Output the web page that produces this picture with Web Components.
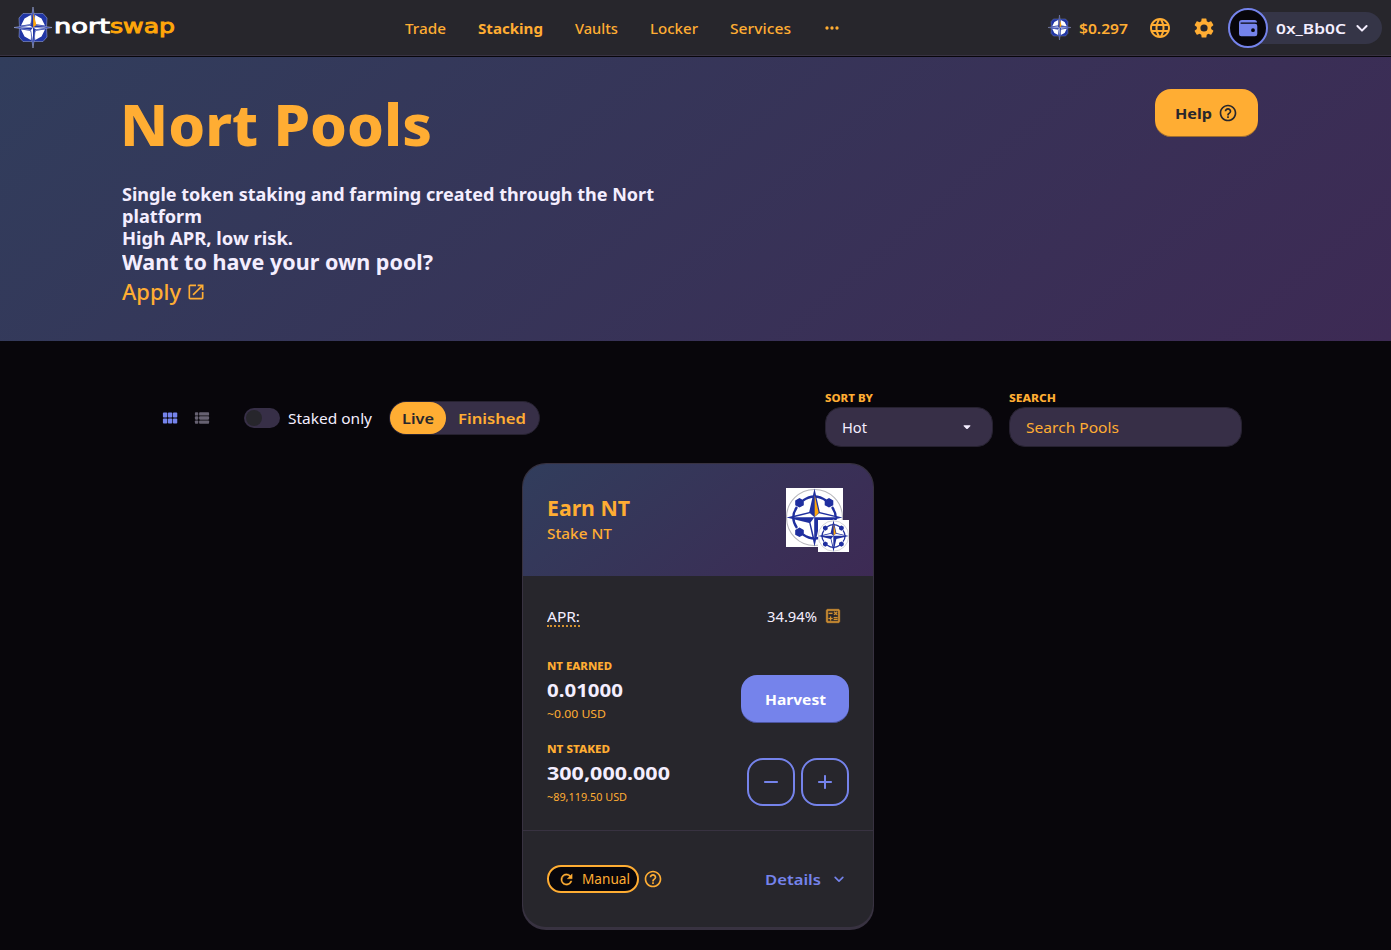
<!DOCTYPE html>
<html lang="en">
<head>
<meta charset="utf-8">
<title>Nort Pools</title>
<style>
html,body{margin:0;height:100%;overflow:hidden;background:#08060b}
body{font-family:"Noto Sans","Open Sans",sans-serif;color:#f4eeff;
--gold:#ffad33;--violet:#7583eb;--panel:#27262c;--line:#383241;--input:#372f47;--grad:linear-gradient(139.73deg,#313d5c 0%,#3d2a54 100%)}
</style>
</head>
<body>
<nort-app></nort-app>
<script>
const ICONS={
 more:'<circle cx="6" cy="12" r="2"/><circle cx="12" cy="12" r="2"/><circle cx="18" cy="12" r="2"/>',
 globe:'<path d="M11.99 2C6.47 2 2 6.48 2 12s4.47 10 9.99 10C17.52 22 22 17.52 22 12S17.52 2 11.99 2zm6.93 6h-2.95c-.32-1.25-.78-2.45-1.38-3.56 1.84.63 3.37 1.91 4.33 3.56zM12 4.04c.83 1.2 1.48 2.53 1.91 3.96h-3.82c.43-1.43 1.08-2.76 1.91-3.96zM4.26 14C4.1 13.36 4 12.69 4 12s.1-1.36.26-2h3.38c-.08.66-.14 1.32-.14 2s.06 1.34.14 2H4.26zm.82 2h2.95c.32 1.25.78 2.45 1.38 3.56-1.84-.63-3.37-1.9-4.33-3.56zm2.95-8H5.08c.96-1.66 2.49-2.93 4.33-3.56C8.81 5.55 8.35 6.75 8.03 8zM12 19.96c-.83-1.2-1.48-2.53-1.91-3.96h3.82c-.43 1.43-1.08 2.76-1.91 3.96zM14.34 14H9.66c-.09-.66-.16-1.32-.16-2s.07-1.35.16-2h4.68c.09.65.16 1.32.16 2s-.07 1.34-.16 2zm.25 5.56c.6-1.11 1.06-2.31 1.38-3.56h2.95c-.96 1.65-2.49 2.93-4.33 3.56zM16.36 14c.08-.66.14-1.32.14-2s-.06-1.34-.14-2h3.38c.16.64.26 1.31.26 2s-.1 1.36-.26 2h-3.38z"/>',
 cog:'<path d="M19.14 12.94c.04-.3.06-.61.06-.94s-.02-.64-.07-.94l2.03-1.58a.49.49 0 0 0 .12-.61l-1.92-3.32a.49.49 0 0 0-.59-.22l-2.39.96c-.5-.38-1.03-.7-1.62-.94l-.36-2.54a.48.48 0 0 0-.48-.41h-3.84c-.24 0-.43.17-.47.41l-.36 2.54c-.59.24-1.13.57-1.62.94l-2.39-.96c-.22-.08-.47 0-.59.22L2.74 8.87c-.12.21-.08.47.12.61l2.03 1.58c-.05.3-.09.63-.09.94s.02.64.07.94l-2.03 1.58a.49.49 0 0 0-.12.61l1.92 3.32c.12.22.37.29.59.22l2.39-.96c.5.38 1.03.7 1.62.94l.36 2.54c.05.24.24.41.48.41h3.84c.24 0 .44-.17.47-.41l.36-2.54c.59-.24 1.13-.56 1.62-.94l2.39.96c.22.08.47 0 .59-.22l1.92-3.32a.49.49 0 0 0-.12-.61l-2.01-1.58zM12 15.6A3.6 3.6 0 1 1 12 8.4a3.6 3.6 0 0 1 0 7.2z"/>',
 wallet:'<path fill-rule="evenodd" d="M6 4h12.5A2.5 2.5 0 0 1 21 6.500H5a.6.6 0 0 0 0 1.200h14a2.300 2.300 0 0 1 2.300 2.300v8a2.300 2.300 0 0 1-2.300 2.300H5.300A2.300 2.300 0 0 1 3 18V7a3 3 0 0 1 3-3zm11 8.300a1.900 1.900 0 1 0 0 3.800 1.900 1.900 0 0 0 0-3.800z"/>',
 chevron:'<path d="M8.120 9.290 12 13.170l3.880-3.880a.996.996 0 1 1 1.410 1.410l-4.590 4.590a.996.996 0 0 1-1.410 0L6.700 10.700a.996.996 0 1 1 1.420-1.410z"/>',
 help:'<path d="M11 18h2v-2h-2v2zm1-16C6.480 2 2 6.480 2 12s4.480 10 10 10 10-4.480 10-10S17.520 2 12 2zm0 18c-4.410 0-8-3.590-8-8s3.590-8 8-8 8 3.590 8 8-3.590 8-8 8zm0-14c-2.210 0-4 1.790-4 4h2c0-1.100.9-2 2-2s2 .9 2 2c0 2-3 1.750-3 5h2c0-2.250 3-2.500 3-5 0-2.210-1.790-4-4-4z"/>',
 open:'<path d="M19 19H5V5h7V3H5a2 2 0 0 0-2 2v14a2 2 0 0 0 2 2h14c1.100 0 2-.9 2-2v-7h-2v7zM14 3v2h3.590l-9.830 9.830 1.410 1.410L19 6.410V10h2V3h-7z"/>',
 grid:'<g><rect x="3.500" y="5.500" width="5.200" height="6" rx="1"/><rect x="9.500" y="5.500" width="5.200" height="6" rx="1"/><rect x="15.500" y="5.500" width="5.200" height="6" rx="1"/><rect x="3.500" y="12.700" width="5.200" height="6" rx="1"/><rect x="9.500" y="12.700" width="5.200" height="6" rx="1"/><rect x="15.500" y="12.700" width="5.200" height="6" rx="1"/></g>',
 list:'<rect x="3.500" y="5" width="4" height="4" rx="1"/><rect x="3.500" y="10" width="4" height="4" rx="1"/><rect x="3.500" y="15" width="4" height="4" rx="1"/><rect x="8.500" y="5" width="12" height="4" rx="1"/><rect x="8.500" y="10" width="12" height="4" rx="1"/><rect x="8.500" y="15" width="12" height="4" rx="1"/>',
 drop:'<path d="M9.300 10.200h5.400c.7 0 .9.500.5 1l-2.500 2.500a1 1 0 0 1-1.400 0l-2.500-2.500c-.4-.5-.2-1 .5-1z"/>',
 calc:'<path d="M19 3H5c-1.100 0-2 .9-2 2v14c0 1.100.9 2 2 2h14c1.100 0 2-.9 2-2V5c0-1.100-.9-2-2-2zm0 16H5V5h14v14z" stroke="currentColor" stroke-width=".7"/><path stroke="currentColor" stroke-width=".3" d="M6.250 7.720h5v1.500h-5zM13 15.750h5v1.500h-5zM13 13.250h5v1.500h-5zM8 18h1.500v-2h2v-1.500h-2v-2H8v2H6V16h2zM14.090 10.950l1.410-1.410 1.410 1.410 1.060-1.060-1.410-1.420 1.410-1.410L16.910 6 15.500 7.410 14.090 6l-1.060 1.060 1.410 1.410-1.410 1.420z"/>',
 minus:'<path d="M18 13H6c-.55 0-1-.45-1-1s.45-1 1-1h12c.55 0 1 .45 1 1s-.45 1-1 1z"/>',
 plus:'<path d="M18 13h-5v5c0 .55-.45 1-1 1s-1-.45-1-1v-5H6c-.55 0-1-.45-1-1s.45-1 1-1h5V6c0-.55.45-1 1-1s1 .45 1 1v5h5c.55 0 1 .45 1 1s-.45 1-1 1z"/>',
 refresh:'<path stroke="currentColor" stroke-width=".5" d="M17.650 6.350A7.960 7.960 0 0 0 12 4a8 8 0 1 0 7.730 10h-2.080A6 6 0 1 1 12 6c1.660 0 3.140.69 4.220 1.780L13 11h7V4l-2.350 2.350z"/>'
};
function define(name,html,setup){
 const t=document.createElement('template');t.innerHTML=html;
 customElements.define(name,class extends HTMLElement{
  constructor(){super();this.attachShadow({mode:'open'}).append(t.content.cloneNode(true));}
  connectedCallback(){if(setup)setup.call(this,this.shadowRoot);}
 });
}

define('nort-icon',`<style>:host{display:block;flex:none;width:var(--s,24px);height:var(--s,24px)}svg{display:block;width:100%;height:100%;fill:currentColor}</style><svg viewBox="0 0 24 24"></svg>`,
 function(r){this.style.setProperty('--s',(this.getAttribute('size')||24)+'px');r.querySelector('svg').innerHTML=ICONS[this.getAttribute('name')];});

define('nort-compass',`<style>:host{display:block;flex:none}svg{display:block;width:100%;height:100%}</style>
<svg viewBox="0 0 38 41" preserveAspectRatio="none">
<path d="M9 6.500 29 6.500 33 11 32.500 20.500 33 30 29 34.500 9 34.500 5 30 5.500 20.500 5 11z" fill="#2136a5" stroke="#8d9ad2" stroke-width=".6" stroke-linejoin="round"/>
<path d="M10.500 11.500 16.800 8 17.300 15.500 15.800 17.300 7 18.500z M27.500 11.500 21.200 8 20.700 15.500 22.200 17.300 31 18.500z M10.500 29.500 16.800 33 17.300 25.500 15.800 23.700 7 22.500z M27.500 29.500 21.200 33 20.700 25.500 22.200 23.700 31 22.500z" fill="#fff"/>
<path d="M19 0 21.500 18 38 20.500 21.500 23 19 41 16.500 23 0 20.500 16.500 18z" fill="#2136a5" stroke="#a5afd9" stroke-width=".6"/>
<path d="M19.200 6v14.500l3.200-2.500z" fill="#ffa70a"/><path d="M5 20.500h14l-3-1.800zM33 20.500H19l3 1.800zM19 34V20.500L17 23z" fill="#fff"/>
</svg>`);

define('token-compass',`<style>:host{display:block}svg{display:block;width:100%;height:100%;background:#fff}</style>
<svg viewBox="0 0 57 59" preserveAspectRatio="none">
<circle cx="28.500" cy="29.500" r="28" fill="none" stroke="#b8b8bd" stroke-width="1.100"/>
<path d="M17 12.500Q28.500 4.500 40 12.500M46 19Q53.500 29.500 46 40M40 46.500Q28.500 54.500 17 46.500M11 40Q3.500 29.500 11 19" fill="none" stroke="#1f2f9f" stroke-width="2.300"/>
<path d="m13.500 10 4.300 2.400v4.800l-4.300 2.400-4.300-2.400v-4.800zM43 10l4.300 2.400v4.800L43 19.600l-4.300-2.400v-4.800zM13.500 39.500l4.300 2.400v4.800l-4.300 2.400-4.300-2.400v-4.800zM43 39.500l4.300 2.400v4.800L43 49.100l-4.300-2.400v-4.800z" fill="#1f2f9f"/>
<path d="M28.500.5 33.800 24 56.500 29.500 33.800 35 28.500 58.500 23.200 35 .5 29.500 23.200 24z" fill="#1f2f9f"/>
<path d="M28.700 7v22l4-4.200z" fill="#ffa70a"/><path d="M8 29.200h20.500l-4.500-4zM50 29.200H28.500l4.500-4zM28.200 50V29.500l-3.700 5z" fill="#fff"/>
</svg>`);

define('nort-brand',`<style>:host{display:flex;align-items:center;margin-left:14px}nort-compass{width:38px;height:41px;margin-top:-1px}svg{display:block;margin-left:3px;overflow:visible}text{font-family:"DejaVu Sans",sans-serif;font-size:19px;font-weight:400;stroke-width:.9}</style>
<nort-compass></nort-compass><svg width="120" height="30"><text x="-1" y="19.800" textLength="56" lengthAdjust="spacingAndGlyphs" fill="#fff" stroke="#fff">nort</text><text x="55" y="19.800" textLength="65" lengthAdjust="spacingAndGlyphs" fill="#ffa70a" stroke="#ffa70a">swap</text></svg>`);

define('nort-wallet',`<style>:host{display:flex;align-items:center;width:154px;height:32px;border-radius:16px;background:#353547;color:#f4eeff;box-sizing:border-box}
.c{box-sizing:border-box;width:40px;height:40px;border-radius:50%;border:2px solid var(--violet);background:#08060b;color:var(--violet);display:grid;place-items:center;flex:none}
fit-text{font:600 15px/24px "Noto Sans",sans-serif;margin:0 4px 0 8px}</style>
<div class="c"><nort-icon name="wallet" size="24"></nort-icon></div><fit-text w="70">0x_Bb0C</fit-text><nort-icon name="chevron"></nort-icon>`);

define('nort-nav',`<style>:host{display:grid;grid-template-columns:405px 1fr auto;height:57px;box-sizing:border-box;background:var(--panel);border-bottom:1px solid #08060b;box-shadow:inset 0 -1px var(--line);align-items:center;padding-right:9px;color:var(--gold)}
nav,.r{display:flex;align-items:center}nav{gap:32px}fit-text{font:500 15px/24px "Noto Sans",sans-serif}.b{font-weight:700}
.r nort-compass{width:23px;height:25px;margin:-2px 8px 0 0}.r fit-text{font-weight:600;margin-right:20px}nort-icon{margin-right:20px}nav nort-icon{margin:0 0 0 -1px}.r nort-icon+nort-icon{margin-right:12px}</style>
<nort-brand></nort-brand>
<nav><fit-text w="41">Trade</fit-text><fit-text class="b" w="65">Stacking</fit-text><fit-text w="43">Vaults</fit-text><fit-text w="48">Locker</fit-text><fit-text w="61">Services</fit-text><nort-icon name="more" size="20"></nort-icon></nav>
<div class="r"><nort-compass></nort-compass><fit-text w="49">$0.297</fit-text><nort-icon name="globe"></nort-icon><nort-icon name="cog"></nort-icon><nort-wallet></nort-wallet></div>`);

define('nort-hero',`<style>:host{display:flex;justify-content:space-between;align-items:flex-start;box-sizing:border-box;height:284px;padding:32px 133px 0 122px;background:var(--grad)}
fit-text{display:block}.h{font:800 57.500px/72px "Noto Sans",sans-serif;color:var(--gold);margin:-1px 0 23px -2px}.p{font:700 18.500px/22px "Noto Sans",sans-serif}.q{font:700 21.500px/26px "Noto Sans",sans-serif}
.a{display:flex;align-items:center;gap:5px;color:var(--gold);font:500 21px/34px "Noto Sans",sans-serif}
button{all:unset;box-sizing:border-box;display:flex;align-items:center;gap:6px;height:48px;width:103px;padding-left:20px;background:var(--gold);color:var(--panel);border-radius:16px;box-shadow:inset 0 -1px rgba(14,14,44,.4)}button fit-text{font:700 15px/24px "Noto Sans",sans-serif}</style>
<div><fit-text class="h" w="312">Nort Pools</fit-text><fit-text class="p" w="532">Single token staking and farming created through the Nort</fit-text><fit-text class="p" w="80">platform</fit-text><fit-text class="p" w="171">High APR, low risk.</fit-text><fit-text class="q" w="311">Want to have your own pool?</fit-text>
<div class="a"><fit-text w="59">Apply</fit-text><nort-icon name="open" size="20"></nort-icon></div></div>
<button><fit-text w="37">Help</fit-text><nort-icon name="help" size="20"></nort-icon></button>`);

define('nort-field',`<style>:host{display:block}.l{display:block;font:700 10.500px/16px "Noto Sans",sans-serif;color:var(--gold);margin-bottom:1px}
.b{box-sizing:border-box;height:40px;border:1px solid #262130;border-radius:16px;background:var(--input);display:flex;align-items:center;justify-content:space-between;padding:0 13px 0 16px}::slotted(fit-text){font:400 15px/24px "Noto Sans",sans-serif}</style>
<slot name="label" class="l"></slot><div class="b"><slot></slot></div>`);

define('nort-toolbar',`<style>:host{display:flex;justify-content:space-between;padding:49px 149px 0 160px;height:122px;box-sizing:border-box}
.l{display:flex;align-items:center;height:34px;margin-top:11px}.l>nort-icon{margin-right:12px;color:var(--violet)}.l>nort-icon+nort-icon{color:#666171;margin-right:32px}
.t{width:36px;height:20px;border-radius:10px;background:var(--input);box-sizing:border-box;padding:2px;margin-right:8px}.t i{display:block;width:16px;height:16px;border-radius:50%;background:var(--panel)}
fit-text{font:400 15px/24px "Noto Sans",sans-serif}.m{display:flex;align-items:center;margin-left:17px;box-sizing:border-box;height:34px;width:151px;border:1px solid #262130;background:var(--input);border-radius:17px;color:var(--gold)}
.m fit-text{font-weight:600}.on{display:flex;align-items:center;justify-content:center;background:var(--gold);color:var(--panel);width:56px;height:32px;border-radius:16px;margin-right:12px}
.r{display:flex;gap:16px}nort-field fit-text[slot]{font:800 10.500px/16px "Noto Sans",sans-serif;display:block}.g{color:var(--gold)}</style>
<div class="l"><nort-icon name="grid" size="20"></nort-icon><nort-icon name="list" size="20"></nort-icon><div class="t"><i></i></div><fit-text w="84">Staked only</fit-text><div class="m"><div class="on"><fit-text w="32">Live</fit-text></div><fit-text w="68">Finished</fit-text></div></div>
<div class="r"><nort-field style="width:168px"><fit-text slot="label" w="48">SORT BY</fit-text><fit-text w="25">Hot</fit-text><nort-icon name="drop"></nort-icon></nort-field>
<nort-field style="width:233px"><fit-text slot="label" w="47">SEARCH</fit-text><fit-text class="g" w="93">Search Pools</fit-text></nort-field></div>`);

define('pool-amount',`<style>:host{display:flex;justify-content:space-between;height:83px}.k{display:flex;flex-direction:column}::slotted([slot=label]){font:800 10.500px/18px "Noto Sans",sans-serif;color:var(--gold)}::slotted([slot=value]){font:700 18.500px/30px "Noto Sans",sans-serif}::slotted([slot=usd]){font:400 11px/18px "Noto Sans",sans-serif;color:var(--gold)}.a{display:flex;gap:6px;margin-top:18px}</style>
<div class="k"><slot name="label"></slot><slot name="value"></slot><slot name="usd"></slot></div><div class="a"><slot></slot></div>`);

define('pool-card',`<style>:host{display:block;box-sizing:border-box;width:352px;height:467px;margin:0 auto 0 522px;border-radius:24px;background:var(--line);padding:1px 1px 3px}
.in{height:463px;border-radius:23px;background:var(--panel);overflow:hidden}
header{box-sizing:border-box;height:112px;background:var(--grad);display:flex;justify-content:space-between;padding:24px 24px 0;color:var(--gold)}
.n{display:flex;flex-direction:column;padding-top:4px}.e{font:700 22px/30px "Noto Sans",sans-serif}.s{font:500 15px/22px "Noto Sans",sans-serif}
.tk{position:relative;width:63px;height:64px}.tk token-compass{width:57px;height:59px}.tk token-compass+token-compass{position:absolute;right:0;bottom:0;width:31px;height:32px}
.apr{display:flex;align-items:center;height:24px;padding:28px 7px 29px 0;font:400 15px/24px "Noto Sans",sans-serif}.apr .d{line-height:18px;border-bottom:2px dotted rgba(255,173,51,.8);margin-right:auto;display:block;margin-top:1px}.apr nort-icon{color:var(--gold);opacity:.8;margin-left:7px}
main{padding:0 24px;height:254px;box-sizing:border-box}
.h{box-sizing:border-box;width:108px;height:48px;background:var(--violet);border-radius:16px;display:grid;place-items:center;color:#fff;box-shadow:inset 0 -1px rgba(14,14,44,.4);font:700 15px/24px "Noto Sans",sans-serif}
.o{box-sizing:border-box;width:48px;height:48px;border:2px solid var(--violet);border-radius:16px;display:grid;place-items:center;color:var(--violet)}
footer{border-top:1px solid var(--line);display:flex;align-items:center;padding:34px 24px 0;color:var(--gold)}
.m{box-sizing:border-box;width:92px;height:28px;border:2px solid var(--gold);border-radius:14px;background:#08060b;display:flex;align-items:center;padding-left:9px;gap:7px;font:400 13.500px/20px "Noto Sans",sans-serif;margin-right:4px}
.m fit-text{margin-top:-1px}.d2{margin-left:auto;color:var(--violet);display:flex;align-items:center;gap:8px;font:600 15px/24px "Noto Sans",sans-serif}</style>
<div class="in"><header><div class="n"><fit-text class="e" w="83">Earn NT</fit-text><fit-text class="s" w="65">Stake NT</fit-text></div><div class="tk"><token-compass></token-compass><token-compass></token-compass></div></header>
<main><div class="apr"><fit-text class="d" w="33">APR:</fit-text><fit-text w="50">34.94%</fit-text><nort-icon name="calc" size="18"></nort-icon></div>
<pool-amount><fit-text slot="label" w="65">NT EARNED</fit-text><fit-text slot="value" w="76">0.01000</fit-text><fit-text slot="usd" w="59">~0.00 USD</fit-text><div class="h"><fit-text w="61">Harvest</fit-text></div></pool-amount>
<pool-amount><fit-text slot="label" w="63">NT STAKED</fit-text><fit-text slot="value" w="123">300,000.000</fit-text><fit-text slot="usd" w="80">~89,119.50 USD</fit-text><div class="o"><nort-icon name="minus"></nort-icon></div><div class="o"><nort-icon name="plus"></nort-icon></div></pool-amount></main>
<footer><div class="m"><nort-icon name="refresh" size="17"></nort-icon><fit-text w="48">Manual</fit-text></div><nort-icon name="help" size="20"></nort-icon><div class="d2"><fit-text w="56">Details</fit-text><nort-icon name="chevron" size="20"></nort-icon></div></footer></div>`);

define('nort-app',`<style>:host{display:block;width:1391px;height:950px}</style><nort-nav></nort-nav><nort-hero></nort-hero><nort-toolbar></nort-toolbar><pool-card></pool-card>`);

/* A single line of text whose glyphs are widened or narrowed to span the width given in "w". */
define('fit-text',`<style>:host{display:inline-block;white-space:nowrap;flex:none}span{display:inline-block;transform-origin:0 50%}</style><span><slot></slot></span>`,
 function(r){const w=+this.getAttribute('w'),s=r.querySelector('span');
  const nat=s.getBoundingClientRect().width;s.style.transform='scaleX('+(w/nat).toFixed(4)+')';this.style.width=w+'px';});
</script>
</body>
</html>
